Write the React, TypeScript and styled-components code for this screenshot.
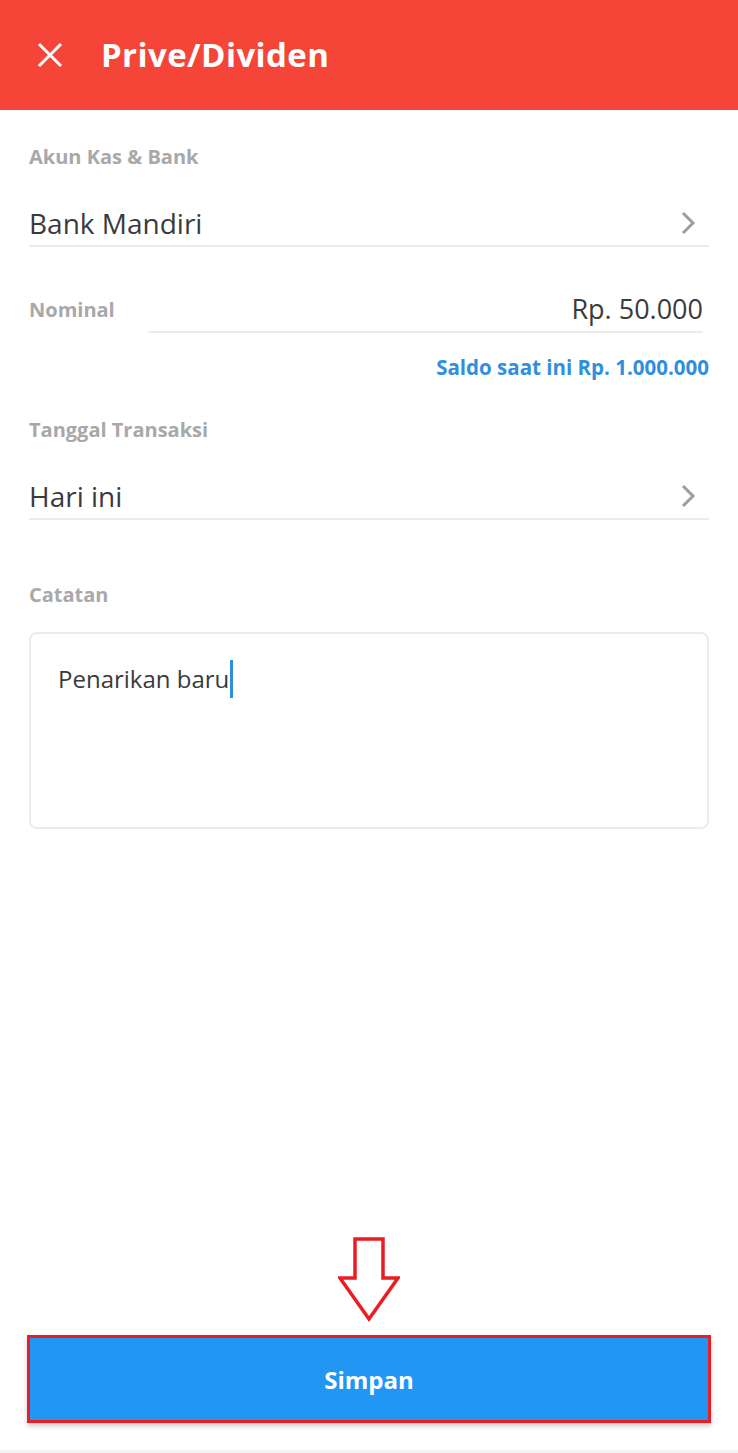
import styled, { createGlobalStyle } from "styled-components";

const GlobalStyle = createGlobalStyle`
  body {
    margin: 0;
    background: #ffffff;
    font-family: "Open Sans", "Noto Sans", sans-serif;
  }
`;

const Page = styled.div`
  width: 738px;
  min-height: 1453px;
  display: flex;
  flex-direction: column;
  background: #ffffff;
`;

const Header = styled.div`
  height: 110px;
  background: #f44538;
  display: flex;
  align-items: center;
  padding-left: 37px;
  gap: 38px;
  box-sizing: border-box;
`;

const CloseButton = styled.div`
  width: 26px;
  height: 26px;
  display: flex;
  align-items: center;
  justify-content: center;
  cursor: pointer;
`;

const Title = styled.h1`
  margin: 0;
  font-size: 33px;
  font-weight: 700;
  color: #ffffff;
  line-height: 40px;
  letter-spacing: 0.4px;
`;

const Form = styled.div`
  padding: 35px 29px 0;
  display: flex;
  flex-direction: column;
`;

const Label = styled.div<{ $gap?: number }>`
  margin-top: ${(p) => p.$gap ?? 0}px;
  font-size: 20px;
  font-weight: 700;
  line-height: 24px;
  color: #a8a8a8;
`;

const SelectRow = styled.div`
  padding-top: 32px;
  height: 44px;
  display: flex;
  align-items: center;
  justify-content: space-between;
  border-bottom: 2px solid #ececec;
  cursor: pointer;
`;

const Value = styled.span`
  font-size: 28px;
  line-height: 34px;
  color: #3a3a3a;
`;

const Chevron = styled.div`
  width: 24px;
  height: 24px;
  margin-right: 9px;
  display: flex;
  align-items: center;
  justify-content: center;
`;

const NominalRow = styled.div`
  margin-top: 39px;
  height: 47px;
  display: flex;
  align-items: stretch;
`;

const NominalLabel = styled(Label)`
  width: 119px;
  display: flex;
  align-items: center;
`;

const NominalInput = styled.div`
  flex: 1;
  margin-right: 6px;
  display: flex;
  align-items: center;
  justify-content: flex-end;
  border-bottom: 2px solid #ececec;
`;

const NominalValue = styled(Value)`
  font-size: 27px;
`;

const Balance = styled.div`
  margin-top: 22px;
  text-align: right;
  font-size: 20.5px;
  font-weight: 700;
  line-height: 24px;
  color: #2f8fde;
`;

const NoteBox = styled.div`
  margin-top: 25px;
  height: 197px;
  box-sizing: border-box;
  border: 2px solid #ececec;
  border-radius: 8px;
  padding: 26px 27px;
`;

const NoteText = styled.span`
  font-size: 24px;
  line-height: 38px;
  color: #3a3a3a;
  display: inline-flex;
  align-items: center;
`;

const Caret = styled.span`
  display: inline-block;
  width: 3px;
  height: 38px;
  margin-left: 1px;
  background: #2f8fde;
`;

const Footer = styled.div`
  margin-top: auto;
  display: flex;
  flex-direction: column;
  align-items: center;
  padding-bottom: 27px;
  border-bottom: 3px solid #f4f4f4;
`;

const Pointer = styled.div`
  width: 62px;
  height: 86px;
  margin-bottom: 12px;
`;

const SaveButton = styled.button`
  width: 684px;
  height: 88px;
  box-sizing: border-box;
  border: 3px solid #ec1c24;
  background: #2196f3;
  color: #ffffff;
  font-family: "Open Sans", "Noto Sans", sans-serif;
  font-size: 24px;
  font-weight: 700;
  box-shadow: 0 3px 5px rgba(0, 0, 0, 0.2);
  cursor: pointer;
`;

const closeIcon = (
  <svg width="26" height="26" viewBox="0 0 26 26">
    <path d="M2 2 L24 24 M24 2 L2 24" stroke="#ffffff" strokeWidth="3" fill="none" />
  </svg>
);

const chevronIcon = (
  <svg width="16" height="24" viewBox="0 0 16 24">
    <path d="M3 2 L13 12 L3 22" stroke="#9e9e9e" strokeWidth="3" fill="none" />
  </svg>
);

const downArrow = (
  <svg width="62" height="86" viewBox="0 0 62 86">
    <path
      d="M17 2 H45 V41 H60 L31 82 L2 41 H17 Z"
      stroke="#ec1c24"
      strokeWidth="3.5"
      fill="#ffffff"
      strokeLinejoin="miter"
    />
  </svg>
);

const App = () => {
  return (
    <Page>
      <GlobalStyle />
      <Header>
        <CloseButton>{closeIcon}</CloseButton>
        <Title>Prive/Dividen</Title>
      </Header>
      <Form>
        <Label>Akun Kas &amp; Bank</Label>
        <SelectRow>
          <Value>Bank Mandiri</Value>
          <Chevron>{chevronIcon}</Chevron>
        </SelectRow>

        <NominalRow>
          <NominalLabel>Nominal</NominalLabel>
          <NominalInput>
            <NominalValue>Rp. 50.000</NominalValue>
          </NominalInput>
        </NominalRow>
        <Balance>Saldo saat ini Rp. 1.000.000</Balance>

        <Label $gap={39}>Tanggal Transaksi</Label>
        <SelectRow>
          <Value>Hari ini</Value>
          <Chevron>{chevronIcon}</Chevron>
        </SelectRow>

        <Label $gap={63}>Catatan</Label>
        <NoteBox>
          <NoteText>
            Penarikan baru
            <Caret />
          </NoteText>
        </NoteBox>
      </Form>
      <Footer>
        <Pointer>{downArrow}</Pointer>
        <SaveButton>Simpan</SaveButton>
      </Footer>
    </Page>
  );
};

export default App;
